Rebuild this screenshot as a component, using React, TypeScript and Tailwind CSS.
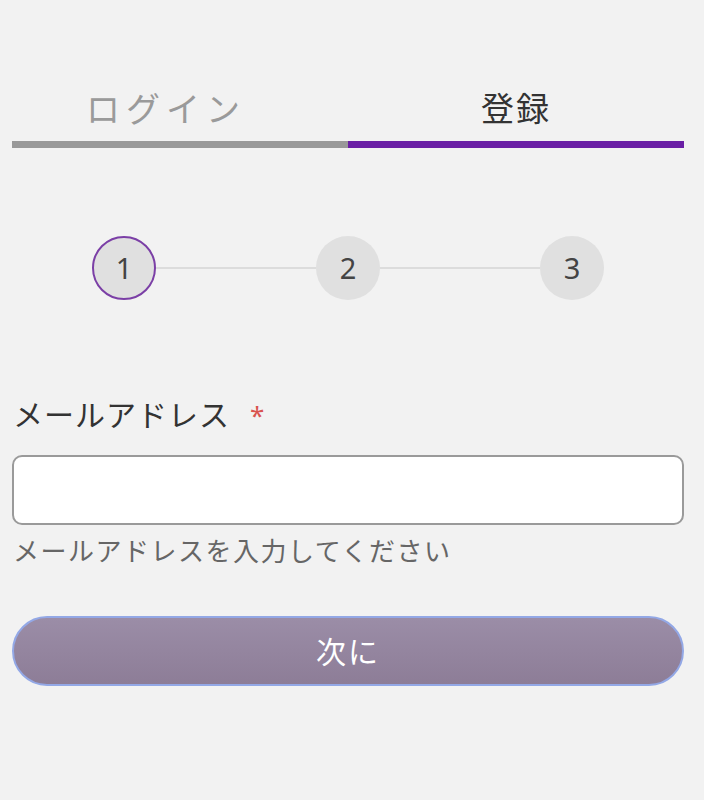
import React from "react";

const font = { fontFamily: '"Noto Sans", "Noto Sans CJK JP", sans-serif' };

function Step({ n, active }: { n: number; active?: boolean }) {
  return (
    <div
      className={`w-[64px] h-[64px] rounded-full bg-[#e0e0e0] flex items-center justify-center text-[29px] text-[#444] shrink-0 ${
        active ? "border-2 border-[#7b3fa6]" : ""
      }`}
    >
      {n}
    </div>
  );
}

export default function App() {
  return (
    <div className="min-h-[800px] w-[704px] bg-[#f2f2f2] pl-[12px] pr-[20px]" style={font}>
      {/* Tabs */}
      <div className="pt-[86px] flex">
        <div className="flex-1 flex flex-col items-center">
          <div className="text-[34px] leading-[46px] tracking-[6px] text-[#9a9a9a] mr-[28px]">ログイン</div>
          <div className="mt-[9px] h-[7px] w-full bg-[#999999]" />
        </div>
        <div className="flex-1 flex flex-col items-center">
          <div className="text-[33px] leading-[46px] tracking-[2px] text-[#333]">登録</div>
          <div className="mt-[9px] h-[7px] w-full bg-[#6a1fa5]" />
        </div>
      </div>

      {/* Stepper */}
      <div className="mt-[88px] flex items-center px-[80px]">
        <Step n={1} active />
        <div className="flex-1 h-[2px] bg-[#dcdcdc]" />
        <Step n={2} />
        <div className="flex-1 h-[2px] bg-[#dcdcdc]" />
        <Step n={3} />
      </div>

      {/* Email field */}
      <div className="mt-[94px]">
        <div className="flex items-center text-[30px] leading-[42px] text-[#333] tracking-[1px] pl-[1px]">
          メールアドレス
          <span className="ml-[20px] text-[#d9534f] text-[26px]">*</span>
        </div>
        <div className="mt-[19px] h-[70px] w-full rounded-[10px] border-2 border-[#9a9a9a] bg-white" />
        <div className="mt-[7px] text-[26px] leading-[38px] text-[#666] tracking-[1.5px] pl-[1px]">
          メールアドレスを入力してください
        </div>
      </div>

      {/* Button */}
      <button className="mt-[46px] w-full h-[70px] rounded-full border-2 border-[#93a8e6] bg-gradient-to-b from-[#9b8da7] to-[#8d7d97] text-white text-[30px] tracking-[2px]">
        次に
      </button>
    </div>
  );
}
